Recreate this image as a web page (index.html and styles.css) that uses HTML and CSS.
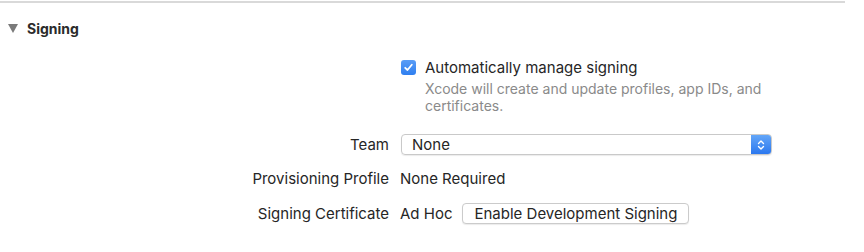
FILE: index.html
```html
<!DOCTYPE html>
<html>
<head>
	<title>Signing</title>
	<link rel="stylesheet" href="styles.css">
	<meta charset="utf-8">
</head>
<body>
	<div class="rule"></div>

	<div class="section__head">
		<span class="disclosure"></span>
		<span class="section__title">Signing</span>
	</div>

	<div class="form">
		<div class="label"></div>
		<div class="value auto">
			<span class="checkbox">
				<svg width="11" height="11" viewBox="0 0 11 11"><path d="M2.2 5.8 L4.5 8 L8.8 2.8" fill="none" stroke="#fff" stroke-width="1.8" stroke-linecap="round" stroke-linejoin="round"/></svg>
			</span>
			<div class="auto__text">
				<div class="auto__title">Automatically manage signing</div>
				<div class="auto__note">Xcode will create and update profiles, app IDs, and certificates.</div>
			</div>
		</div>

		<div class="label">Team</div>
		<div class="value">
			<div class="popup">
				<span class="popup__text">None</span>
				<span class="popup__stepper">
					<svg width="8" height="12" viewBox="0 0 8 12"><path d="M1.5 4.5 L4 2 L6.5 4.5 M1.5 7.5 L4 10 L6.5 7.5" fill="none" stroke="#fff" stroke-width="1.4" stroke-linecap="round" stroke-linejoin="round"/></svg>
				</span>
			</div>
		</div>

		<div class="label">Provisioning Profile</div>
		<div class="value">None Required</div>

		<div class="label">Signing Certificate</div>
		<div class="value cert">
			<span>Ad Hoc</span>
			<button class="push__button">Enable Development Signing</button>
		</div>
	</div>
</body>
</html>
```

FILE: styles.css
```css
* {
	box-sizing: border-box;
	margin: 0;
	padding: 0;
}

body {
	background: #fff;
	font-family: "Inter", "Liberation Sans", sans-serif;
	font-size: 15px;
	color: #262626;
	width: 864px;
	height: 252px;
	overflow: hidden;
}

.rule {
	width: 845px;
	height: 2px;
	margin-top: 1px;
	background: #d9d9d9;
}

.section__head {
	display: flex;
	align-items: center;
	height: 18px;
	margin-top: 16px;
	padding-left: 8px;
}

.disclosure {
	width: 0;
	height: 0;
	border-left: 5px solid transparent;
	border-right: 5px solid transparent;
	border-top: 9px solid #7a7a7a;
	margin-right: 9px;
}

.section__title {
	font-weight: bold;
	font-size: 14px;
	color: #2b2b2b;
}

.form {
	display: grid;
	grid-template-columns: 389px 1fr;
	column-gap: 11px;
	row-gap: 15px;
	margin-top: 23px;
	align-items: center;
}

.label {
	text-align: right;
	line-height: 18px;
}

.value {
	line-height: 18px;
}

.auto {
	display: flex;
	align-items: flex-start;
	padding-left: 1px;
	margin-bottom: 5px;
}

.checkbox {
	display: flex;
	align-items: center;
	justify-content: center;
	width: 15px;
	height: 15px;
	border-radius: 3px;
	background: linear-gradient(#5a9df6, #2f7ff0);
	margin-right: 9px;
	flex-shrink: 0;
}

.auto__title {
	line-height: 16px;
	margin-bottom: 4px;
}

.auto__note {
	width: 345px;
	color: #8a8a8a;
	font-size: 14px;
	line-height: 17px;
}

.popup {
	display: flex;
	width: 371px;
	height: 21px;
	border: 1px solid #c9c9c9;
	border-radius: 4px;
	box-shadow: 0 1px 1px rgba(0, 0, 0, .08);
	overflow: hidden;
	margin-left: 1px;
}

.popup__text {
	flex: 1;
	padding-left: 10px;
	line-height: 19px;
}

.popup__stepper {
	display: flex;
	align-items: center;
	justify-content: center;
	width: 20px;
	background: linear-gradient(#63a6f8, #2b78ef);
}

.cert {
	display: flex;
	align-items: center;
	gap: 10px;
}

.push__button {
	font-family: inherit;
	font-size: 15px;
	color: #262626;
	background: #fff;
	border: 1px solid #cbcbcb;
	border-radius: 4px;
	box-shadow: 0 1px 1px rgba(0, 0, 0, .08);
	height: 21px;
	padding: 0 11px;
}
```
